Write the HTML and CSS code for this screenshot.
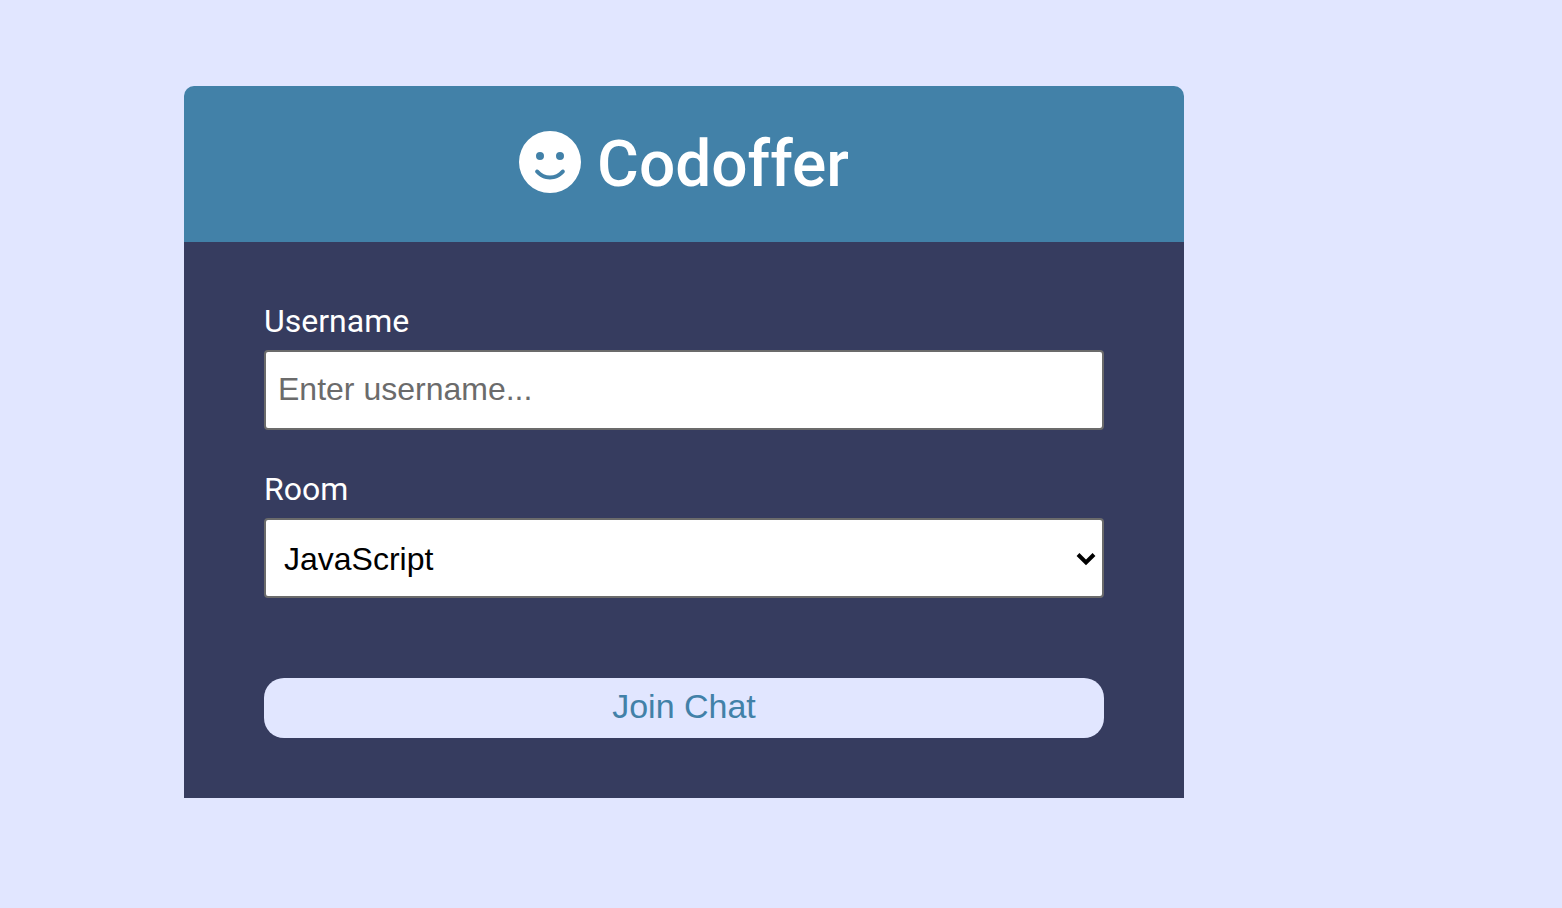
FILE: index.html
```html
<!DOCTYPE html>
<html lang="en">
<head>
<meta charset="utf-8">
<meta name="viewport" content="width=device-width, initial-scale=1">
<title>Codoffer</title>
<link rel="stylesheet" href="styles.css">
</head>
<body>
<div class="join-container">
  <header class="join-header">
    <h1 class="brand">
      <svg class="brand-icon" viewBox="8 8 496 496" aria-hidden="true">
        <path fill="currentColor" fill-rule="evenodd" d="M256 8a248 248 0 1 0 0 496a248 248 0 1 0 0-496zM176 176a32 32 0 1 1 0 64a32 32 0 1 1 0-64zM336 176a32 32 0 1 1 0 64a32 32 0 1 1 0-64zM370.800 342.200C342.300 376.400 300.500 396 256 396s-86.300-19.600-114.800-53.800c-13.600-16.300 11-36.700 24.600-20.500 22.400 26.900 55.200 42.200 90.200 42.200s67.800-15.400 90.200-42.200c13.400-16.200 38.100 4.200 24.600 20.500z"/>
      </svg>
      <span>Codoffer</span>
    </h1>
  </header>
  <main class="join-main">
    <form>
      <div class="form-control">
        <label for="username">Username</label>
        <input class="field" type="text" id="username" name="username" placeholder="Enter username...">
      </div>
      <div class="form-control">
        <label for="room">Room</label>
        <div class="select-wrap">
          <select class="field room-select" id="room" name="room">
            <option>JavaScript</option>
          </select>
          <svg class="chevron" viewBox="0 0 20 14" aria-hidden="true"><path d="M2 2.500l8 8 8-8" fill="none" stroke="currentColor" stroke-width="4"/></svg>
        </div>
      </div>
      <button class="btn" type="submit">Join Chat</button>
    </form>
  </main>
</div>
</body>
</html>
```
FILE: styles.css
```css
* {
  box-sizing: border-box;
}

body {
  margin: 0;
  background: #e1e6ff;
  color: #fff;
  font-family: Roboto, sans-serif;
  font-size: 32px;
}

.join-container {
  max-width: 1184px;
  padding: 86px 0 110px 184px;
}

.join-header {
  padding: 40px 40px 38px;
  background: #4281a8;
  border-radius: 10px 10px 0 0;
}

.brand {
  display: flex;
  align-items: center;
  justify-content: center;
  gap: 16px;
  margin: 0;
  font-size: 64px;
  font-weight: 500;
  line-height: 78px;
}

.brand-icon {
  width: 62px;
  height: 62px;
  margin-bottom: 6px;
}

.join-main {
  padding: 60px 80px;
  background: #363c5f;
}

.form-control {
  margin-bottom: 40px;
}

.form-control label {
  display: block;
  margin-bottom: 10px;
  line-height: 38px;
}

.field {
  display: block;
  width: 100%;
  height: 80px;
  padding: 0 12px 2px;
  border: 2px solid #6b6b6b;
  border-radius: 4px;
  background: #fff;
  color: #000;
  font-family: "Liberation Sans", Arial, sans-serif;
  font-size: 32px;
}

.field::placeholder {
  color: #6b6b6b;
}

.select-wrap {
  position: relative;
}

.room-select {
  appearance: none;
  padding: 2px 18px 0;
}

.chevron {
  position: absolute;
  top: 34px;
  right: 8px;
  width: 20px;
  height: 14px;
  color: #000;
  pointer-events: none;
}

.btn {
  display: block;
  width: 100%;
  margin-top: 80px;
  padding: 8px 20px 12px;
  border: 0;
  border-radius: 20px;
  background: #e1e6ff;
  color: #4281a8;
  font-family: "Liberation Sans", Arial, sans-serif;
  font-size: 34px;
  line-height: 40px;
}
```
